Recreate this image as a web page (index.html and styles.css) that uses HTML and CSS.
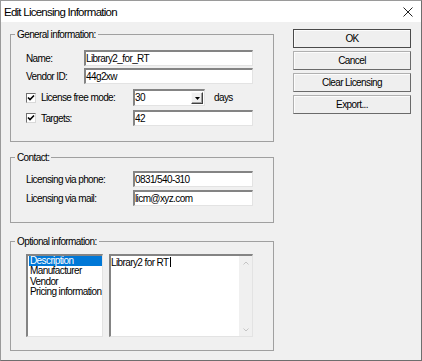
FILE: index.html
```html
<!DOCTYPE html>
<html lang="en">

<head>
    <meta charset="UTF-8">
    <title>Edit Licensing Information</title>
    <link rel="stylesheet" href="styles.css">
</head>

<body>
    <div class="window">
        <div class="titlebar">
            <span class="title">Edit Licensing Information</span>
            <svg class="close" width="10" height="10" viewBox="0 0 10 10">
                <path d="M0.5 0.5 L9.5 9.5 M9.5 0.5 L0.5 9.5" stroke="#222" stroke-width="1" fill="none" />
            </svg>
        </div>

        <div class="content">
            <div class="groups">
                <!-- General information -->
                <div class="group general">
                    <div class="group-title">General information:</div>
                    <div class="row r1">
                        <span class="label w-name">Name:</span>
                        <div class="edit w-long">Library2_for_RT</div>
                    </div>
                    <div class="row r2">
                        <span class="label w-name">Vendor ID:</span>
                        <div class="edit w-long">44g2xw</div>
                    </div>
                    <div class="row r3">
                        <span class="check">
                            <svg width="8" height="8" viewBox="0 0 8 8">
                                <path d="M1 3.5 L3 5.5 L7 1.5" stroke="#000" stroke-width="1.6" fill="none" />
                            </svg>
                        </span>
                        <span class="label w-check">License free mode:</span>
                        <div class="combo">
                            <span class="combo-val">30</span>
                            <span class="combo-btn">
                                <svg width="5" height="3" viewBox="0 0 5 3">
                                    <path d="M0 0 H5 L2.5 3 Z" fill="#000" />
                                </svg>
                            </span>
                        </div>
                        <span class="days">days</span>
                    </div>
                    <div class="row r4">
                        <span class="check">
                            <svg width="8" height="8" viewBox="0 0 8 8">
                                <path d="M1 3.5 L3 5.5 L7 1.5" stroke="#000" stroke-width="1.6" fill="none" />
                            </svg>
                        </span>
                        <span class="label w-check">Targets:</span>
                        <div class="edit w-short">42</div>
                    </div>
                </div>

                <!-- Contact -->
                <div class="group contact">
                    <div class="group-title">Contact:</div>
                    <div class="row r1">
                        <span class="label w-contact">Licensing via phone:</span>
                        <div class="edit w-short">0831/540-310</div>
                    </div>
                    <div class="row r2">
                        <span class="label w-contact">Licensing via mail:</span>
                        <div class="edit w-short">licm@xyz.com</div>
                    </div>
                </div>

                <!-- Optional information -->
                <div class="group optional">
                    <div class="group-title">Optional information:</div>
                    <div class="opt-row">
                        <div class="listbox">
                            <div class="item selected">Description</div>
                            <div class="item">Manufacturer</div>
                            <div class="item">Vendor</div>
                            <div class="item">Pricing information</div>
                        </div>
                        <div class="memo">
                            <div class="memo-text">Library2 for RT<span class="caret"></span></div>
                            <div class="vscroll">
                                <svg width="6" height="4" viewBox="0 0 6 4">
                                    <path d="M0.5 3.5 L3 1 L5.5 3.5" stroke="#c4c4c4" stroke-width="1" fill="none" />
                                </svg>
                                <svg width="6" height="4" viewBox="0 0 6 4">
                                    <path d="M0.5 0.5 L3 3 L5.5 0.5" stroke="#c4c4c4" stroke-width="1" fill="none" />
                                </svg>
                            </div>
                        </div>
                    </div>
                </div>
            </div>

            <div class="buttons">
                <div class="btn default">OK</div>
                <div class="btn">Cancel</div>
                <div class="btn">Clear Licensing</div>
                <div class="btn">Export...</div>
            </div>
        </div>
    </div>
</body>

</html>
```

FILE: styles.css
```css
* {
    box-sizing: border-box;
    margin: 0;
    padding: 0;
}

body {
    margin: 0;
    background: #fff;
}

.window {
    width: 422px;
    height: 361px;
    border: 1px solid;
    border-color: #9a9a9a #6e6e6e #6e6e6e #9a9a9a;
    background: #f0f0f0;
    font-family: "Liberation Sans", Arial, sans-serif;
    font-size: 10px;
    letter-spacing: -0.6px;
    color: #000;
    display: flex;
    flex-direction: column;
}

.titlebar {
    height: 21px;
    background: #fff;
    display: flex;
    align-items: center;
    justify-content: space-between;
    padding: 0 8px 0 3px;
    font-size: 11.5px;
    letter-spacing: -0.75px;
}

.content {
    display: flex;
    padding-left: 9px;
}

.groups {
    width: 264px;
    padding-top: 12px;
}

/* group boxes */
.group {
    border: 1px solid #a0a0a0;
    padding-left: 15px;
}

.general {
    height: 108px;
}

.contact {
    height: 66px;
    margin-top: 15px;
}

.optional {
    height: 110px;
    margin-top: 18px;
}

.group-title {
    width: max-content;
    height: 11px;
    line-height: 11px;
    margin: -6px 0 0 -11px;
    padding: 0 2px;
    background: #f0f0f0;
}

.row {
    display: flex;
    align-items: center;
    height: 16px;
    white-space: nowrap;
}

.general .r1 {
    margin-top: 10px;
}

.general .r2 {
    margin-top: 2px;
}

.general .r3 {
    margin-top: 5px;
    height: 17px;
}

.general .r4 {
    margin-top: 4px;
}

.contact .r1 {
    margin-top: 8px;
}

.contact .r2 {
    margin-top: 3px;
}

.w-name {
    width: 58px;
}

.w-check {
    width: 92px;
}

.w-contact {
    width: 107px;
}

/* sunken edit fields */
.edit,
.combo,
.listbox,
.memo,
.check {
    background: #fff;
    border-style: solid;
    border-width: 2px 1px 1px 2px;
    border-color: #848484 #e3e3e3 #e3e3e3 #848484;
}

.edit {
    height: 16px;
    line-height: 13px;
    overflow: hidden;
}

.w-long {
    width: 169px;
}

.w-short {
    width: 120px;
}

.check {
    width: 10px;
    height: 10px;
    margin-right: 5px;
    display: flex;
    align-items: center;
    justify-content: center;
    border-width: 1px;
    border-color: #707070 #d8d8d8 #d8d8d8 #707070;
}

.combo {
    width: 72px;
    height: 17px;
    display: flex;
}

.combo-val {
    flex: 1;
    line-height: 14px;
}

.combo-btn {
    width: 12px;
    height: 12px;
    margin: 1px 1px 0 0;
    background: #f0f0f0;
    border: 1px solid;
    border-color: #fafafa #404040 #404040 #fafafa;
    box-shadow: inset -1px -1px 0 #a0a0a0;
    display: flex;
    align-items: center;
    justify-content: center;
}

.days {
    margin-left: 9px;
}

/* optional information */
.opt-row {
    display: flex;
    gap: 6px;
    height: 83px;
    margin-top: 7px;
}

.listbox {
    width: 77px;
    height: 83px;
    padding-left: 1px;
    overflow: hidden;
}

.item {
    line-height: 10.3px;
    padding-left: 1px;
    white-space: nowrap;
}

.item.selected {
    background: #0078d7;
    color: #fff;
}

.memo {
    width: 144px;
    height: 83px;
    display: flex;
}

.memo-text {
    flex: 1;
    line-height: 11px;
    padding-top: 1px;
}

.caret {
    display: inline-block;
    width: 1px;
    height: 10px;
    margin-left: 1px;
    background: #000;
    vertical-align: -1px;
}

.vscroll {
    width: 13px;
    background: #f0f0f0;
    display: flex;
    flex-direction: column;
    justify-content: space-between;
    align-items: center;
    padding: 5px 0 4px;
}

/* buttons */
.buttons {
    width: 118px;
    margin-left: 19px;
    padding-top: 7px;
    display: flex;
    flex-direction: column;
    gap: 3px;
}

.btn {
    height: 19px;
    border: 1px solid;
    border-color: #b0b0b0 #6a6a6a #6a6a6a #b0b0b0;
    background: #efefef;
    box-shadow: inset 1px 1px 0 #fcfcfc;
    display: flex;
    align-items: center;
    justify-content: center;
}

.btn.default {
    border-color: #4a4a4a;
}
```
